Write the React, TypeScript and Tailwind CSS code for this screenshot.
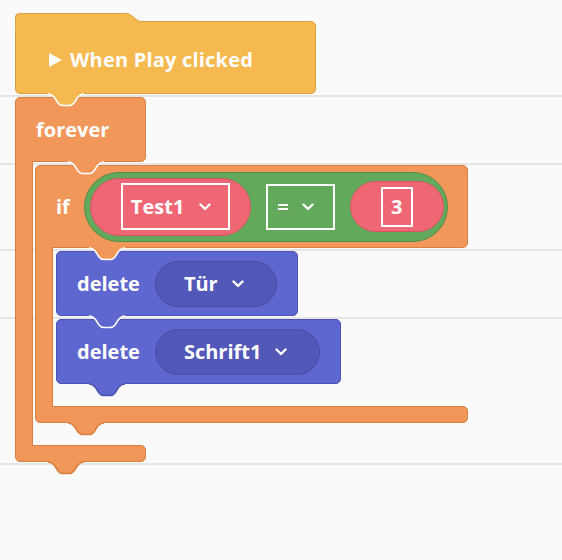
import { ReactNode } from "react";

const HAT = "#f5b94f";
const HAT_EDGE = "#d9a13e";
const ORANGE = "#f1975a";
const ORANGE_EDGE = "#d8803f";
const PURPLE = "#5e66cf";

// tab that sticks out below a block and sits in the next one
const Notch = ({
  fill,
  stroke,
  className,
}: {
  fill: string;
  stroke: string;
  className: string;
}) => (
  <svg
    width="36"
    height="14"
    viewBox="0 0 36 14"
    className={`absolute top-full z-30 overflow-visible ${className}`}
  >
    <path
      d="M0 0 H36 V1 C33 1 31.5 2 29.5 4.5 L26 10 C24.5 12 23 12.5 21 12.5 H15 C13 12.5 11.5 12 10 10 L6.5 4.5 C4.5 2 3 1 0 1 Z"
      fill={fill}
    />
    <path
      d="M0 1 C3 1 4.5 2 6.5 4.5 L10 10 C11.5 12 13 12.5 15 12.5 H21 C23 12.5 24.5 12 26 10 L29.5 4.5 C31.5 2 33 1 36 1"
      fill="none"
      stroke={stroke}
      strokeWidth="1.5"
    />
  </svg>
);

const Chevron = () => (
  <svg width="12" height="8" viewBox="0 0 12 8" className="shrink-0">
    <path
      d="M1.5 1.5 L6 6 L10.5 1.5"
      fill="none"
      stroke="white"
      strokeWidth="2.4"
      strokeLinecap="round"
      strokeLinejoin="round"
    />
  </svg>
);

const Label = ({ children }: { children: ReactNode }) => (
  <span className="text-[20px] leading-none font-bold text-white">{children}</span>
);

const HatBlock = () => (
  <div className="relative flex h-[73px] w-[301px] items-center gap-2 rounded-[5px] border border-[#d9a13e] bg-[#f5b94f] pl-[33px] pt-1">
    <svg
      width="128"
      height="11"
      viewBox="0 0 128 11"
      className="absolute -left-px -top-[9px]"
    >
      <path
        d="M0 11 V4.5 Q0 0.5 4.5 0.5 H111 C113 0.5 114.5 1 116 2.3 L122.5 7.3 C124 8.3 125 8.5 128 8.5 V11 Z"
        fill={HAT}
      />
      <path
        d="M0.5 11 V4.5 Q0.5 0.5 4.5 0.5 H111 C113 0.5 114.5 1 116 2.3 L122.5 7.3 C124 8.3 125 8.5 128 8.5"
        fill="none"
        stroke={HAT_EDGE}
      />
    </svg>
    <svg width="13" height="14" viewBox="0 0 13 14">
      <path d="M0 0 L13 7 L0 14 Z" fill="white" />
    </svg>
    <span className="text-[20px] leading-none font-bold tracking-[0.2px] text-white">
      When Play clicked
    </span>
    <Notch fill={HAT} stroke="white" className="left-[32px]" />
  </div>
);

const CBlock = ({
  label,
  headerClass,
  width,
  mouthClass,
  innerNotch,
  children,
}: {
  label: ReactNode;
  headerClass: string;
  width: string;
  mouthClass: string;
  innerNotch: string;
  children: ReactNode;
}) => (
  <div className="flex flex-col items-start">
    <div
      className={`relative flex items-center rounded-[5px] rounded-bl-none border border-[#d8803f] bg-[#f1975a] pl-5 ${width} ${headerClass}`}
    >
      {label}
      <Notch fill={ORANGE} stroke="white" className={innerNotch} />
    </div>
    <div className="flex">
      <div className="relative z-10 -my-px w-[18px] border-x border-[#d8803f] bg-[#f1975a]" />
      <div className={`flex flex-col items-start pt-[3px] pb-[22px] ${mouthClass}`}>
        {children}
      </div>
    </div>
    <div
      className={`relative h-[17px] rounded-[5px] rounded-tl-none border border-[#d8803f] bg-[#f1975a] ${width}`}
    >
      <Notch fill={ORANGE} stroke={ORANGE_EDGE} className="left-[32px]" />
    </div>
  </div>
);

const DeleteBlock = ({
  item,
  last = false,
  className = "",
}: {
  item: string;
  last?: boolean;
  className?: string;
}) => (
  <div
    className={`relative flex h-[65px] items-center gap-[15px] rounded-[5px] border border-[#4c53b3] bg-[#5e66cf] px-5 ${className}`}
  >
    <Label>delete</Label>
    <div className="flex h-[46px] items-center gap-[14px] rounded-full border border-[#464da4] bg-[#5158b7] pl-[28px] pr-[32px]">
      <Label>{item}</Label>
      <Chevron />
    </div>
    <Notch
      fill={PURPLE}
      stroke={last ? "#4c53b3" : "white"}
      className="left-[32px]"
    />
  </div>
);

const Condition = () => (
  <div className="flex h-[70px] items-center gap-[15px] rounded-full border border-[#4f8d49] bg-[#63a95c] pl-[5px] pr-[3px]">
    <div className="flex h-[58px] items-center rounded-full border border-[#d55463] bg-[#ef6674] pl-[30px] pr-5">
      <div className="flex h-[47px] items-center gap-[15px] border-2 border-white pl-2 pr-[17px]">
        <Label>Test1</Label>
        <Chevron />
      </div>
    </div>
    <div className="flex h-[46px] items-center gap-[13px] border-2 border-white pl-[9px] pr-[19px]">
      <Label>=</Label>
      <Chevron />
    </div>
    <div className="flex h-[51px] items-center rounded-full border border-[#d55463] bg-[#ef6674] px-[30px]">
      <div className="flex h-10 w-8 items-center justify-center border-2 border-white">
        <Label>3</Label>
      </div>
    </div>
  </div>
);

export default function App() {
  return (
    <div className="relative h-[560px] w-[562px] overflow-hidden bg-[#fafafa] font-['Open_Sans',sans-serif]">
      {/* row lines behind the script */}
      <div className="absolute inset-x-0 top-0 flex flex-col">
        <div className="h-[97px] border-b-2 border-[#e6e6e6]" />
        <div className="h-[68px] border-b-2 border-[#e6e6e6]" />
        <div className="h-[86px] border-b-2 border-[#e6e6e6]" />
        <div className="h-[68px] border-b-2 border-[#e6e6e6]" />
        <div className="h-[146px] border-b-2 border-[#e6e6e6]" />
      </div>

      <div className="relative flex flex-col items-start pl-[15px] pt-[21px]">
        <HatBlock />
        <div className="mt-[3px]">
          <CBlock
            label={<Label>forever</Label>}
            headerClass="h-[65px]"
            width="w-[131px]"
            mouthClass="ml-[2px]"
            innerNotch="left-[52px]"
          >
            <CBlock
              label={
                <div className="flex items-center gap-[14px]">
                  <Label>if</Label>
                  <Condition />
                </div>
              }
              headerClass="h-[83px]"
              width="w-[433px]"
              mouthClass="ml-[3px]"
              innerNotch="left-[53px]"
            >
              <DeleteBlock item="Tür" />
              <DeleteBlock item="Schrift1" last className="mt-[3px]" />
            </CBlock>
          </CBlock>
        </div>
      </div>
    </div>
  );
}
